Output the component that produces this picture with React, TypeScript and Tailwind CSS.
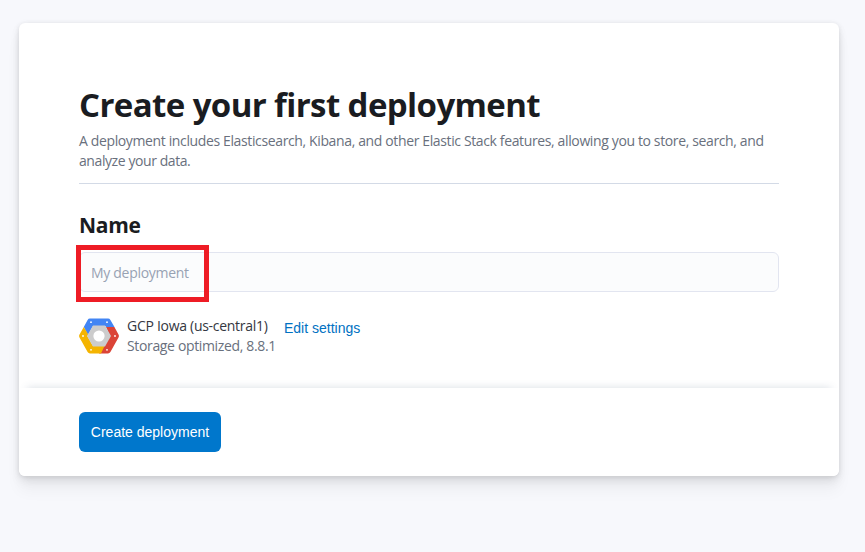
function GcpLogo() {
  return (
    <svg width="40" height="36" viewBox="0 0 40 36" className="block">
      <path d="M11 0.5H29Q30.6 0.5 31.4 1.9L35.5 9 31 12 26 8H14L9 17 4.8 9 8.6 1.9Q9.4 0.5 11 0.5Z" fill="#4285f4" />
      <path d="M35.4 9L39.5 16.4Q40.3 18 39.5 19.6L31.4 34.1Q30.6 35.5 29 35.5H20L24 27 31 18 27 9Z" fill="#db4437" />
      <path d="M4.8 9L0.5 16.4Q-0.3 18 0.5 19.6L8.6 34.1Q9.4 35.5 11 35.5H22L25.5 28H14L8.3 18 9.5 17Z" fill="#f4b400" />
      <path d="M14 7.5H26L32 18 26 28.5H14L8 18Z" fill="#cccccc" />
      <circle cx="20" cy="18" r="5.6" fill="#ffffff" />
      <g fill="#ffffff">
        <circle cx="12" cy="4.2" r="0.9" />
        <circle cx="28" cy="4.2" r="0.9" />
        <circle cx="36" cy="18" r="0.9" />
        <circle cx="28" cy="31.8" r="0.9" />
        <circle cx="12" cy="31.8" r="0.9" />
        <circle cx="4" cy="18" r="0.9" />
      </g>
    </svg>
  );
}

export default function App() {
  return (
    <main className="h-[552px] w-[865px] overflow-hidden bg-[#f7f8fc] pt-[23px] pl-[19px] font-['Open_Sans','Noto_Sans',sans-serif]">
      <section className="flex h-[453px] w-[820px] flex-col overflow-hidden rounded-md bg-white shadow-[0_1px_4px_rgba(0,0,0,0.08),0_2.6px_8px_rgba(0,0,0,0.06),0_5.7px_12px_rgba(0,0,0,0.05),0_15px_15px_rgba(0,0,0,0.04)]">
        <div className="flex h-[365px] shrink-0 flex-col px-[60px] pt-[60px]">
          <h1 className="h-[46px] text-[33px] leading-[44px] font-bold whitespace-nowrap text-[#1a1c21]">
            <span className="tracking-[-0.6px]">Create your first deployment</span>
          </h1>
          <p className="mt-[2px] h-[53px] border-b border-[#d3dae6] text-[14px] leading-5 whitespace-nowrap text-[#69707d]">
            <span className="tracking-[-0.37px]">A deployment includes Elasticsearch, Kibana, and other Elastic Stack features, allowing you to store, search, and</span>
            <br />
            <span className="tracking-[-0.42px]">analyze your data.</span>
          </p>
          <h2 className="mt-[25px] h-[43px] text-[21px] leading-[32px] font-bold text-[#1a1c21]">
            <span className="tracking-[-0.3px]">Name</span>
          </h2>
          <div className="relative h-10 shrink-0">
            <input
              aria-label="Name"
              placeholder="My deployment"
              className="block h-10 w-full rounded-md border border-[#e2e5f0] bg-[#fbfcfd] px-[11px] pt-px text-[14px] tracking-[-0.3px] outline-none placeholder:text-[#98a2b3]"
            />
            <div className="pointer-events-none absolute top-[-7px] left-[-3px] h-[57px] w-[133px] border-[5px] border-[#ee1c25]" />
          </div>
          <div className="mt-[24px] flex">
            <div className="mt-[2px] w-12">
              <GcpLogo />
            </div>
            <div className="w-[157px] text-[14px] leading-5 whitespace-nowrap">
              <div className="text-[#343741]">
                <span className="tracking-[-0.29px]">GCP Iowa (us-central1)</span>
              </div>
              <div className="text-[#69707d]">
                <span className="tracking-[-0.35px]">Storage optimized, 8.8.1</span>
              </div>
            </div>
            <a className="mt-[2px] font-['Liberation_Sans',sans-serif] text-[14px] leading-5 whitespace-nowrap text-[#0071c2]">Edit settings</a>
          </div>
        </div>
        <footer className="h-[88px] shrink-0 bg-white px-[60px] pt-6 shadow-[0_-8px_8px_-8px_rgba(65,90,120,0.2)]">
          <button className="block h-10 w-[142px] rounded-md bg-[#0077cc] font-['Liberation_Sans',sans-serif] text-[14px] whitespace-nowrap text-white">
            Create deployment
          </button>
        </footer>
      </section>
    </main>
  );
}
